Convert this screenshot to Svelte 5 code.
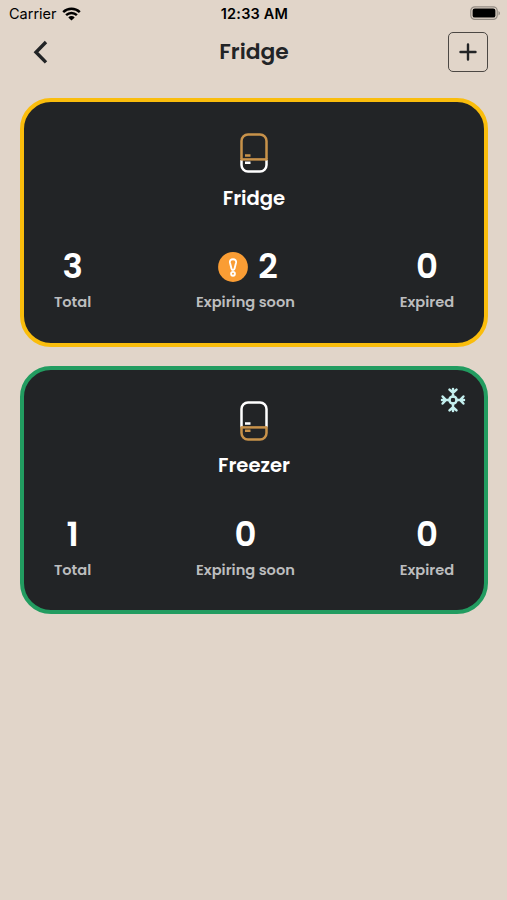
<script>
    const storages = [
        {name: "Fridge", total: 3, expiring: 2, expired: 0, frozen: false},
        {name: "Freezer", total: 1, expiring: 0, expired: 0, frozen: true},
    ];
</script>

<div class="screen">
    <div class="status-bar">
        <div class="carrier">
            <span>Carrier</span>
            <svg width="19" height="14" viewBox="0 0 19 14">
                <path d="M1.2 5.2a12 12 0 0 1 16.6 0M4.1 8.2a7.8 7.8 0 0 1 10.8 0" fill="none" stroke="#000" stroke-width="2.5" />
                <path d="M9.5 13.6 6.3 10.4a4.6 4.6 0 0 1 6.4 0z" />
            </svg>
        </div>
        <span class="time">12:33 AM</span>
        <div class="battery">
            <svg width="31" height="15" viewBox="0 0 31 15">
                <rect x="0.8" y="0.8" width="26.4" height="12.6" rx="4" fill="none" stroke="#938b83" stroke-width="1.2" />
                <rect x="2.6" y="2.6" width="22.8" height="9" rx="2.2" />
                <path d="M28.5 5v4.4c2-.8 2-3.6 0-4.4z" fill="#938b83" />
            </svg>
        </div>
    </div>

    <header>
        <button class="back" aria-label="Back">
            <svg width="18" height="26" viewBox="0 0 18 26">
                <path d="M15 3 5 13.2l10 10.2" fill="none" stroke="#222426" stroke-width="3.4" />
            </svg>
        </button>
        <h1>Fridge</h1>
        <button class="add" aria-label="Add">
            <svg width="18" height="18" viewBox="0 0 18 18">
                <path d="M9 1.5v15M1.5 9h15" stroke="#222426" stroke-width="2.4" stroke-linecap="round" />
            </svg>
        </button>
    </header>

    <main>
        {#each storages as storage}
            <section class={storage.expiring ? "card warning" : "card ok"}>
                {#if storage.frozen}
                    <svg class="snowflake" width="26" height="26" viewBox="0 0 26 26">
                        <circle cx="13" cy="13" r="3.6" />
                        {#each [0, 90, 180, 270] as angle}
                            <path d="M13 9.4V2M9.5 2.6 13 5.9 16.5 2.6" transform="rotate({angle} 13 13)" />
                        {/each}
                    </svg>
                {/if}
                <svg class={storage.frozen ? "appliance lower" : "appliance upper"} width="28" height="40" viewBox="0 0 28 40">
                    <path class="top" d="M1.5 26.5V8a6.5 6.5 0 0 1 6.5-6.5h12a6.5 6.5 0 0 1 6.5 6.5v18.5M5 22.6h5.5" />
                    <path class="bottom" d="M1.5 27v5a6.5 6.5 0 0 0 6.5 6.5h12a6.5 6.5 0 0 0 6.5-6.5v-5M5 29.8h5.5" />
                    <path class="divider" d="M0.5 26.4h27" />
                </svg>
                <h2>{storage.name}</h2>
                <div class="stats">
                    <div class="stat">
                        <div class="count">{storage.total}</div>
                        <div class="label">Total</div>
                    </div>
                    <div class="stat">
                        <div class={storage.expiring ? "count flagged" : "count"}>
                            {#if storage.expiring}
                                <svg width="30" height="30" viewBox="0 0 30 30">
                                    <circle cx="15" cy="15" r="14.9" fill="#fa9d34" />
                                    <g fill="none" stroke="#fff" stroke-width="1.9">
                                        <path d="M15 7.2c-2.2 0-3.4 1.3-3.1 3.2l1.6 6.4c.4 1.5 2.6 1.5 3 0l1.6-6.4c.3-1.9-.9-3.2-3.1-3.2z" />
                                        <circle cx="15" cy="21.8" r="1.9" />
                                    </g>
                                </svg>
                            {/if}
                            {storage.expiring}
                        </div>
                        <div class="label">Expiring soon</div>
                    </div>
                    <div class="stat">
                        <div class="count">{storage.expired}</div>
                        <div class="label">Expired</div>
                    </div>
                </div>
            </section>
        {/each}
    </main>
</div>

<style>
    :global(body) {
        background-color: #e1d5c9;
    }

    .screen {
        min-height: 900px;
        background-color: #e1d5c9;
        color: #222426;
        font-family: Poppins, Inter, sans-serif;
    }

    .status-bar {
        display: grid;
        grid-template-columns: 1fr auto 1fr;
        align-items: center;
        height: 27px;
        padding: 0 7px 0 9px;
        color: #000;
        font-family: Inter, sans-serif;
        font-size: 14.5px;
    }

    .carrier {
        display: flex;
        align-items: center;
        gap: 5px;
    }

    .time {
        font-weight: 600;
        letter-spacing: 0.2px;
    }

    .battery {
        display: flex;
        justify-content: flex-end;
        margin-right: -1px;
    }

    header {
        display: grid;
        grid-template-columns: 40px 1fr 40px;
        align-items: center;
        height: 50px;
        padding: 0 19px 0 20px;
    }

    button {
        display: flex;
        align-items: center;
        justify-content: center;
        box-sizing: border-box;
        width: 40px;
        height: 40px;
        padding: 0;
        border: none;
        background: none;
    }

    .add {
        border: 1.5px solid #4c4844;
        border-radius: 5px;
    }

    h1 {
        margin: 0;
        font-size: 21.8px;
        font-weight: 600;
        line-height: 32px;
        text-align: center;
    }

    main {
        display: flex;
        flex-direction: column;
        gap: 19.4px;
        padding: 21.4px 19.4px 0 20.4px;
    }

    .card {
        position: relative;
        display: flex;
        flex-direction: column;
        align-items: center;
        box-sizing: border-box;
        height: 248.2px;
        padding: 31px 29.5px 0;
        border: 4px solid;
        border-radius: 31px;
        background-color: #222426;
        color: #fff;
    }

    .card.warning {
        border-color: #fabd0c;
    }

    .card.ok {
        border-color: #229c60;
    }

    .snowflake {
        position: absolute;
        top: 17px;
        right: 17.5px;
        fill: none;
        stroke: #c4efee;
        stroke-width: 2.5;
        stroke-linecap: round;
    }

    .appliance {
        fill: none;
        stroke: #fff;
        stroke-width: 2.5;
    }

    .upper .top,
    .lower .bottom,
    .divider {
        stroke: #c8924a;
    }

    h2 {
        margin: 11.5px 0 0;
        font-size: 19.6px;
        font-weight: 600;
        line-height: 26px;
    }

    .stats {
        display: flex;
        justify-content: space-between;
        width: 100%;
        margin-top: 35px;
    }

    .stat {
        display: flex;
        flex-direction: column;
        align-items: center;
    }

    .count {
        display: flex;
        align-items: center;
        gap: 10px;
        height: 42px;
        font-size: 34px;
        font-weight: 600;
    }

    .count.flagged {
        padding-left: 5px;
    }

    .label {
        margin-top: 4.4px;
        color: #bcbdbe;
        font-size: 14.6px;
        font-weight: 600;
        line-height: 20px;
        white-space: nowrap;
    }
</style>
